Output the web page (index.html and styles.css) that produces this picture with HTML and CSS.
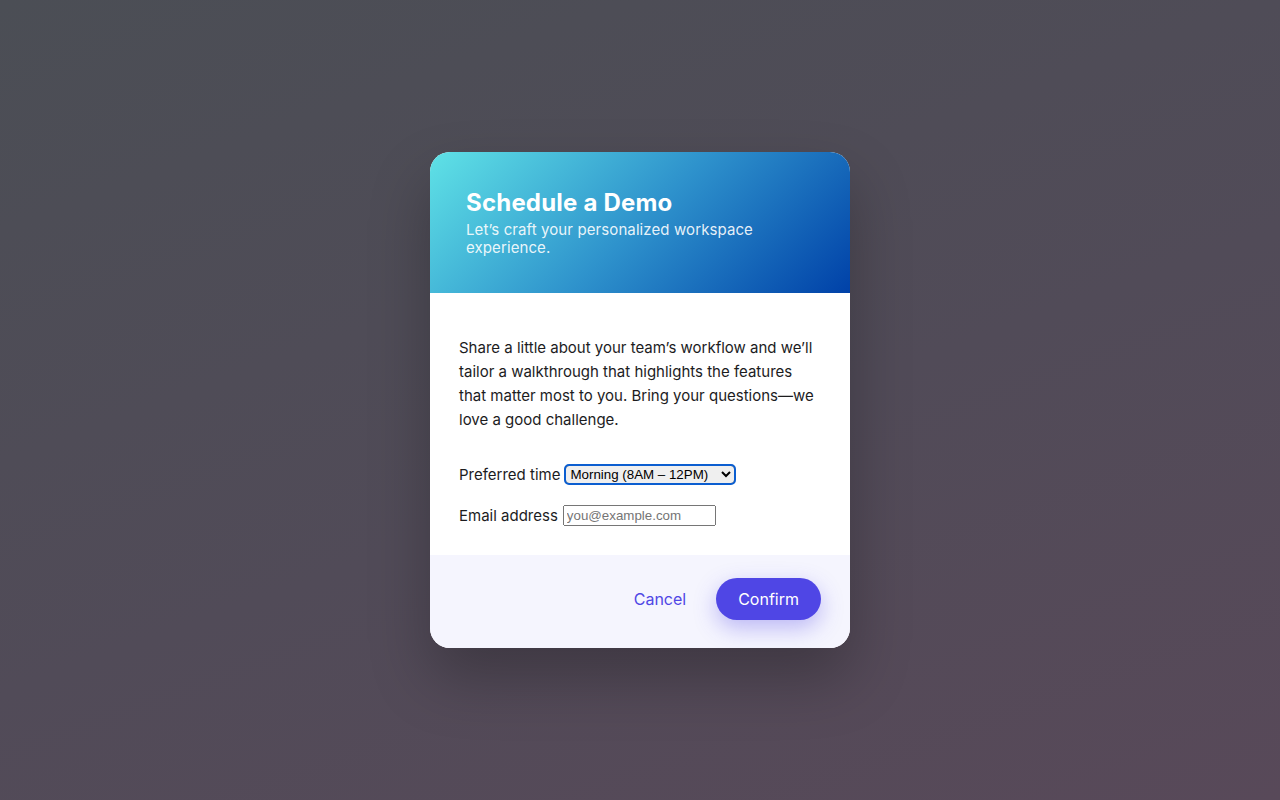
FILE: index.html
```
<!DOCTYPE html>
<html lang="en">
<head>
<meta charset="utf-8">
<title>Schedule a Demo</title>
<link rel="stylesheet" href="styles.css">
</head>
<body>
<div class="backdrop">
  <div class="modal" role="dialog" aria-labelledby="demo-title">
    <header class="modal-header">
      <h2 id="demo-title" class="modal-title">Schedule a Demo</h2>
      <p class="modal-subtitle">Let’s craft your personalized workspace experience.</p>
    </header>
    <div class="modal-body">
      <p class="intro">Share a little about your team’s workflow and we’ll tailor a walkthrough that highlights the features that matter most to you. Bring your questions—we love a good challenge.</p>
      <label class="field">Preferred time
        <select class="time-select">
          <option>Morning (8AM – 12PM)</option>
          <option>Afternoon (12PM – 5PM)</option>
        </select>
      </label>
      <label class="field">Email address
        <input class="email-input" type="email" placeholder="you@example.com">
      </label>
    </div>
    <footer class="modal-footer">
      <button class="btn btn-cancel" type="button">Cancel</button>
      <button class="btn btn-confirm" type="button">Confirm</button>
    </footer>
  </div>
</div>
</body>
</html>
```
FILE: styles.css
```
* { box-sizing: border-box; }
html, body { margin: 0; padding: 0; }
body {
  font-family: Inter, "Noto Sans", sans-serif;
  background: linear-gradient(160deg, #4b4e55 0%, #514b58 55%, #584959 100%);
  min-height: 100vh;
}
.backdrop {
  min-height: 100vh;
  display: flex;
  align-items: center;
  justify-content: center;
}
.modal {
  width: 420px;
  border-radius: 20px;
  overflow: hidden;
  background: #ffffff;
  box-shadow: 0 30px 60px rgba(0, 0, 0, 0.25);
}
.modal-header {
  padding: 37px 36px 36px;
  background: linear-gradient(135deg, #5fe2e6 0%, #2e92cc 50%, #0041a8 100%);
  color: #ffffff;
}
.modal-title {
  margin: 0;
  font-size: 24px;
  font-weight: 700;
  line-height: 1.2;
  letter-spacing: 0.2px;
}
.modal-subtitle {
  margin: 4px 0 0;
  font-size: 15px;
  line-height: 18px;
  letter-spacing: 0.1px;
  color: rgba(255, 255, 255, 0.9);
}
.modal-body {
  padding: 43px 28px 29px 29px;
  color: #1c1c1e;
}
.intro {
  margin: 0 0 33px;
  font-size: 15px;
  line-height: 24px;
}
.field {
  display: flex;
  align-items: center;
  gap: 5px;
  font-size: 15px;
  line-height: 18px;
}
.field + .field { margin-top: 21px; }
.time-select {
  outline: 2px solid #0b5ed0;
  outline-offset: -1px;
  border-radius: 4px;
}
.email-input {
  width: 153px;
}
.modal-footer {
  display: flex;
  justify-content: flex-end;
  align-items: center;
  gap: 8px;
  padding: 23px 29px 28px;
  background: #f5f5fe;
}
.btn {
  height: 42px;
  padding: 0 22px;
  border: none;
  border-radius: 999px;
  font-family: Inter, "Noto Sans", sans-serif;
  font-size: 16px;
  cursor: pointer;
}
.btn-cancel {
  background: transparent;
  color: #4f46e5;
}
.btn-confirm {
  background: #4f46e5;
  color: #ffffff;
  box-shadow: 0 8px 22px rgba(79, 70, 229, 0.35);
}
```
